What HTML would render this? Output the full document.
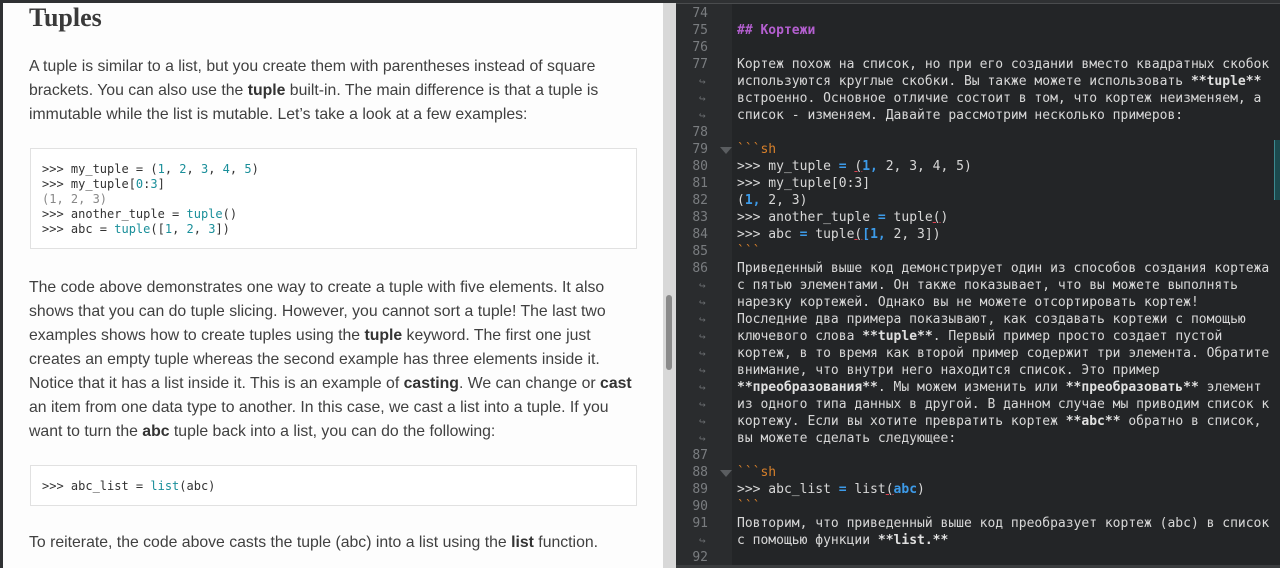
<!DOCTYPE html>
<html><head><meta charset="utf-8"><style>
*{margin:0;padding:0;box-sizing:border-box}
body{width:1280px;height:568px;overflow:hidden;background:#2f3133;position:relative;font-family:"Liberation Sans",sans-serif}
#left{position:absolute;left:3px;top:3px;width:660px;height:565px;background:#fdfdfd;color:#404040}
h1{position:absolute;left:26px;top:0;font-family:"Liberation Serif",serif;font-weight:bold;font-size:26px;color:#3a3a3a}
.p{position:absolute;left:26px;font-size:15.8px;line-height:24px;white-space:nowrap}
.p b{color:#333}
.code{position:absolute;left:27px;width:607px;border:1px solid #e1e1e1;background:#fff;font-family:"DejaVu Sans Mono",monospace;font-size:12px;line-height:15px;color:#333;padding-left:11px;white-space:pre}
.t{color:#1a8f9a}.g{color:#888}
#sb{position:absolute;left:663px;top:3px;width:13px;height:565px;background:#d8d8d8}
#thumb{position:absolute;left:666px;top:295px;width:6px;height:75px;background:#8a8a8a;border-radius:3px}
#ed{position:absolute;left:676px;top:3px;width:604px;height:562px;background:#232527;border-top:1px solid #4a4c4e}
#gut{position:absolute;left:0;top:0;width:56px;height:562px;background:#2a2c2e}
.row{position:absolute;left:0;height:17px;line-height:17px;font-family:"DejaVu Sans Mono",monospace;font-size:13px;white-space:pre;width:604px}
.n{position:absolute;right:572px;color:#7a7d80;text-align:right}
.w{position:absolute;left:23px;color:#6a6d70;font-size:11px}
.tx{position:absolute;left:61px;color:#d8d8d8}
.h{color:#b45fd0;font-weight:bold}.o{color:#d8802a}.bl{color:#3d9be9;font-weight:bold}.bo{font-weight:bold;color:#e0e0e0}
.u{text-decoration:underline;text-decoration-color:#e04050}
.fold{position:absolute;left:44px;top:6px;width:0;height:0;border-left:6px solid transparent;border-right:6px solid transparent;border-top:7px solid #5a5d60}
#bot{position:absolute;left:676px;top:565px;width:604px;height:3px;background:#3a3c3e}
#mm{position:absolute;left:1274px;top:140px;width:6px;height:60px;background:#1c4a4e;border-left:1px solid #3c8a90}
</style></head><body>
<div id="left">
<h1>Tuples</h1>
<div class="p" style="top:52px">A tuple is similar to a list, but you create them with parentheses instead of square<br>brackets. You can also use the <b>tuple</b> built-in. The main difference is that a tuple is<br>immutable while the list is mutable. Let’s take a look at a few examples:</div>
<div class="code" style="top:145px;height:101px;padding-top:13px">&gt;&gt;&gt; my_tuple = (<span class="t">1</span>, <span class="t">2</span>, <span class="t">3</span>, <span class="t">4</span>, <span class="t">5</span>)
&gt;&gt;&gt; my_tuple[<span class="t">0</span>:<span class="t">3</span>]
<span class="g">(1, 2, 3)</span>
&gt;&gt;&gt; another_tuple = <span class="t">tuple</span>()
&gt;&gt;&gt; abc = <span class="t">tuple</span>([<span class="t">1</span>, <span class="t">2</span>, <span class="t">3</span>])</div>
<div class="p" style="top:273px">The code above demonstrates one way to create a tuple with five elements. It also<br>shows that you can do tuple slicing. However, you cannot sort a tuple! The last two<br>examples shows how to create tuples using the <b>tuple</b> keyword. The first one just<br>creates an empty tuple whereas the second example has three elements inside it.<br>Notice that it has a list inside it. This is an example of <b>casting</b>. We can change or <b>cast</b><br>an item from one data type to another. In this case, we cast a list into a tuple. If you<br>want to turn the <b>abc</b> tuple back into a list, you can do the following:</div>
<div class="code" style="top:462px;height:41px;padding-top:13px">&gt;&gt;&gt; abc_list = <span class="t">list</span>(abc)</div>
<div class="p" style="top:528px">To reiterate, the code above casts the tuple (abc) into a list using the <b>list</b> function.</div>
</div>
<div id="sb"></div><div id="thumb"></div>
<div id="ed"><div id="gut"></div>
<div class="row" style="top:1px"><span class="n">74</span></div>
<div class="row" style="top:18px"><span class="n">75</span><span class="tx"><span class="h">## Кортежи</span></span></div>
<div class="row" style="top:35px"><span class="n">76</span></div>
<div class="row" style="top:52px"><span class="n">77</span><span class="tx">Кортеж похож на список, но при его создании вместо квадратных скобок</span></div>
<div class="row" style="top:69px"><span class="w">↪</span><span class="tx">используются круглые скобки. Вы также можете использовать <span class="bo">**tuple**</span></span></div>
<div class="row" style="top:86px"><span class="w">↪</span><span class="tx">встроенно. Основное отличие состоит в том, что кортеж неизменяем, а</span></div>
<div class="row" style="top:103px"><span class="w">↪</span><span class="tx">список - изменяем. Давайте рассмотрим несколько примеров:</span></div>
<div class="row" style="top:120px"><span class="n">78</span></div>
<div class="row" style="top:137px"><span class="n">79</span><span class="fold"></span><span class="tx o">&#96;&#96;&#96;sh</span></div>
<div class="row" style="top:154px"><span class="n">80</span><span class="tx">&gt;&gt;&gt; my_tuple <span class="bl">=</span> <span class="u">(</span><span class="bl">1,</span> 2, 3, 4, 5)</span></div>
<div class="row" style="top:171px"><span class="n">81</span><span class="tx">&gt;&gt;&gt; my_tuple[0:3]</span></div>
<div class="row" style="top:188px"><span class="n">82</span><span class="tx">(<span class="bl">1,</span> 2, 3)</span></div>
<div class="row" style="top:205px"><span class="n">83</span><span class="tx">&gt;&gt;&gt; another_tuple <span class="bl">=</span> tuple<span class="u">(</span>)</span></div>
<div class="row" style="top:222px"><span class="n">84</span><span class="tx">&gt;&gt;&gt; abc <span class="bl">=</span> tuple<span class="u">(</span><span class="bl">[1,</span> 2, 3])</span></div>
<div class="row" style="top:239px"><span class="n">85</span><span class="tx o">&#96;&#96;&#96;</span></div>
<div class="row" style="top:256px"><span class="n">86</span><span class="tx">Приведенный выше код демонстрирует один из способов создания кортежа</span></div>
<div class="row" style="top:273px"><span class="w">↪</span><span class="tx">с пятью элементами. Он также показывает, что вы можете выполнять</span></div>
<div class="row" style="top:290px"><span class="w">↪</span><span class="tx">нарезку кортежей. Однако вы не можете отсортировать кортеж!</span></div>
<div class="row" style="top:307px"><span class="w">↪</span><span class="tx">Последние два примера показывают, как создавать кортежи с помощью</span></div>
<div class="row" style="top:324px"><span class="w">↪</span><span class="tx">ключевого слова <span class="bo">**tuple**</span>. Первый пример просто создает пустой</span></div>
<div class="row" style="top:341px"><span class="w">↪</span><span class="tx">кортеж, в то время как второй пример содержит три элемента. Обратите</span></div>
<div class="row" style="top:358px"><span class="w">↪</span><span class="tx">внимание, что внутри него находится список. Это пример</span></div>
<div class="row" style="top:375px"><span class="w">↪</span><span class="tx"><span class="bo">**преобразования**</span>. Мы можем изменить или <span class="bo">**преобразовать**</span> элемент</span></div>
<div class="row" style="top:392px"><span class="w">↪</span><span class="tx">из одного типа данных в другой. В данном случае мы приводим список к</span></div>
<div class="row" style="top:409px"><span class="w">↪</span><span class="tx">кортежу. Если вы хотите превратить кортеж <span class="bo">**abc**</span> обратно в список,</span></div>
<div class="row" style="top:426px"><span class="w">↪</span><span class="tx">вы можете сделать следующее:</span></div>
<div class="row" style="top:443px"><span class="n">87</span></div>
<div class="row" style="top:460px"><span class="n">88</span><span class="fold"></span><span class="tx o">&#96;&#96;&#96;sh</span></div>
<div class="row" style="top:477px"><span class="n">89</span><span class="tx">&gt;&gt;&gt; abc_list <span class="bl">=</span> list<span class="u">(</span><span class="bl">abc</span>)</span></div>
<div class="row" style="top:494px"><span class="n">90</span><span class="tx o">&#96;&#96;&#96;</span></div>
<div class="row" style="top:511px"><span class="n">91</span><span class="tx">Повторим, что приведенный выше код преобразует кортеж (abc) в список</span></div>
<div class="row" style="top:528px"><span class="w">↪</span><span class="tx">с помощью функции <span class="bo">**list.**</span></span></div>
<div class="row" style="top:545px"><span class="n">92</span></div>
</div>
<div id="mm"></div>
<div id="bot"></div>
</body></html>
